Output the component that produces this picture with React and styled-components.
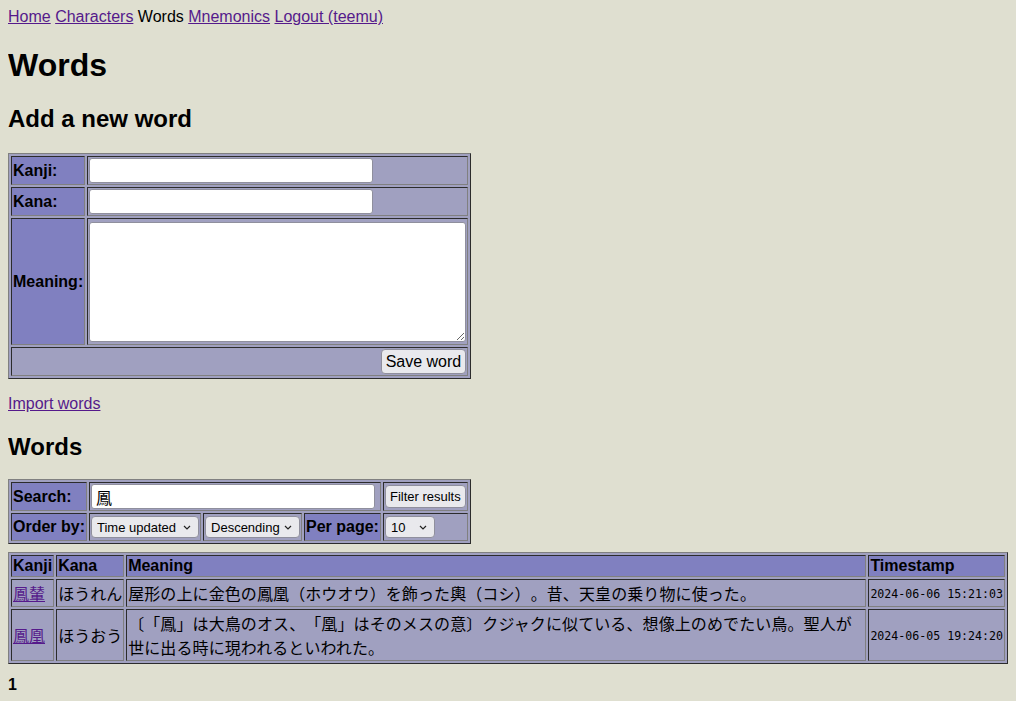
import React from "react";
import styled, { createGlobalStyle } from "styled-components";

const GlobalStyle = createGlobalStyle`
    body {
        margin: 8px;
        background: #dfdfd0;
        color: #000;
        font-family: "Liberation Sans", Arial, "Noto Sans CJK JP", sans-serif;
        font-size: 16px;
        text-spacing-trim: space-all;
    }
`;

const chevron = "data:image/svg+xml," + encodeURIComponent(
    '<svg xmlns="http://www.w3.org/2000/svg" width="8" height="5" viewBox="0 0 8 5"><path d="M1 1l3 3 3-3" fill="none" stroke="#222" stroke-width="1.2"/></svg>'
);

const Nav = styled.div`
    line-height: normal;
`;

const Link = styled.a`
    color: #551a8b;
    text-decoration: underline;
    cursor: pointer;
`;

const Title = styled.h1`
    font-size: 32px;
    margin: 21px 0;
`;

const Subtitle = styled.h2`
    font-size: 24px;
    margin: 20px 0 ${props => props.$after || 20}px;
`;

const Table = styled.table`
    border: 1px outset grey;
    border-spacing: 2px;
    background: #a0a0c0;
    width: ${props => (props.$full ? "100%" : "auto")};
    margin-top: ${props => props.$gap || 0}px;
`;

const Th = styled.th`
    border: 1px inset grey;
    padding: 1px;
    background: #8080c0;
    text-align: left;
    white-space: nowrap;
`;

const Td = styled.td`
    border: 1px inset grey;
    padding: 1px;
    text-align: ${props => props.$align || "left"};
    white-space: ${props => (props.$wrap ? "normal" : "nowrap")};
    letter-spacing: ${props => (props.$wrap ? "0.1px" : "normal")};
`;

const TextInput = styled.input`
    box-sizing: border-box;
    width: 284px;
    height: 25px;
    margin: 0;
    padding: 1px 4px;
    background: #fff;
    border: 1px solid #8f8f9d;
    border-radius: 3px;
    font-family: "Liberation Sans", Arial, "Noto Sans CJK JP", sans-serif;
    font-size: 16px;
    vertical-align: middle;
`;

const TextArea = styled.textarea`
    box-sizing: border-box;
    width: 377px;
    height: 120px;
    margin: 2px 0 1px;
    background: #fff;
    border: 1px solid #8f8f9d;
    border-radius: 3px;
    font-family: "Liberation Sans", Arial, sans-serif;
    vertical-align: top;
`;

const Button = styled.button`
    box-sizing: border-box;
    font-family: "Liberation Sans", Arial, sans-serif;
    font-size: ${props => props.$size || 13}px;
    padding: 0 ${props => props.$pad || 4}px;
    height: ${props => props.$h || 23}px;
    margin: 0;
    color: #000;
    background: #e9e9ed;
    border: 1px solid #8f8f9d;
    border-radius: 4px;
    vertical-align: middle;
`;

const Select = styled.select`
    box-sizing: border-box;
    appearance: none;
    font-family: "Liberation Sans", Arial, sans-serif;
    font-size: 13px;
    color: #000;
    height: 22px;
    width: ${props => props.$w}px;
    margin: 1px 0;
    padding: 0 14px 0 5px;
    background: #e9e9ed url("${chevron}") no-repeat right 7px center;
    border: 1px solid #8f8f9d;
    border-radius: 4px;
    vertical-align: middle;
`;

const Para = styled.p`
    margin: 16px 0;
`;

const Pager = styled.div`
    margin-top: 12px;
    font-weight: bold;
`;

const Stamp = styled.span`
    font-family: "DejaVu Sans Mono", "Liberation Mono", monospace;
    font-size: 11.6px;
`;

const words = [
    {
        kanji: "鳳輦",
        kana: "ほうれん",
        meaning: "屋形の上に金色の鳳凰（ホウオウ）を飾った輿（コシ）。昔、天皇の乗り物に使った。",
        stamp: "2024-06-06 15:21:03",
    },
    {
        kanji: "鳳凰",
        kana: "ほうおう",
        meaning: "〔「鳳」は大鳥のオス、「凰」はそのメスの意〕クジャクに似ている、想像上のめでたい鳥。聖人が世に出る時に現われるといわれた。",
        stamp: "2024-06-05 19:24:20",
    },
];

const App = () => (
    <>
        <GlobalStyle />
        <Nav>
            <Link>Home</Link> <Link>Characters</Link> Words <Link>Mnemonics</Link> <Link>Logout (teemu)</Link>
        </Nav>
        <Title>Words</Title>
        <Subtitle>Add a new word</Subtitle>
        <Table>
            <tbody>
                <tr>
                    <Th>Kanji:</Th>
                    <Td><TextInput type="text" /></Td>
                </tr>
                <tr>
                    <Th>Kana:</Th>
                    <Td><TextInput type="text" /></Td>
                </tr>
                <tr>
                    <Th>Meaning:</Th>
                    <Td><TextArea /></Td>
                </tr>
                <tr>
                    <Td colSpan={2} $align="right">
                        <Button $size={16} $pad={4} $h={25}>Save word</Button>
                    </Td>
                </tr>
            </tbody>
        </Table>
        <Para><Link>Import words</Link></Para>
        <Subtitle $after={18}>Words</Subtitle>
        <Table>
            <tbody>
                <tr>
                    <Th>Search:</Th>
                    <Td colSpan={3}><TextInput type="text" defaultValue="鳳" /></Td>
                    <Td><Button>Filter results</Button></Td>
                </tr>
                <tr>
                    <Th>Order by:</Th>
                    <Td>
                        <Select $w={108} defaultValue="updated">
                            <option value="updated">Time updated</option>
                            <option value="created">Time created</option>
                        </Select>
                    </Td>
                    <Td>
                        <Select $w={95} defaultValue="desc">
                            <option value="desc">Descending</option>
                            <option value="asc">Ascending</option>
                        </Select>
                    </Td>
                    <Th>Per page:</Th>
                    <Td>
                        <Select $w={50} defaultValue="10">
                            <option>10</option>
                            <option>25</option>
                            <option>50</option>
                        </Select>
                    </Td>
                </tr>
            </tbody>
        </Table>
        <Table $full $gap={8}>
            <tbody>
                <tr>
                    <Th>Kanji</Th>
                    <Th>Kana</Th>
                    <Th>Meaning</Th>
                    <Th>Timestamp</Th>
                </tr>
                {words.map(word => (
                    <tr key={word.kanji}>
                        <Td><Link>{word.kanji}</Link></Td>
                        <Td>{word.kana}</Td>
                        <Td $wrap>{word.meaning}</Td>
                        <Td><Stamp>{word.stamp}</Stamp></Td>
                    </tr>
                ))}
            </tbody>
        </Table>
        <Pager>1</Pager>
    </>
);

export default App;
